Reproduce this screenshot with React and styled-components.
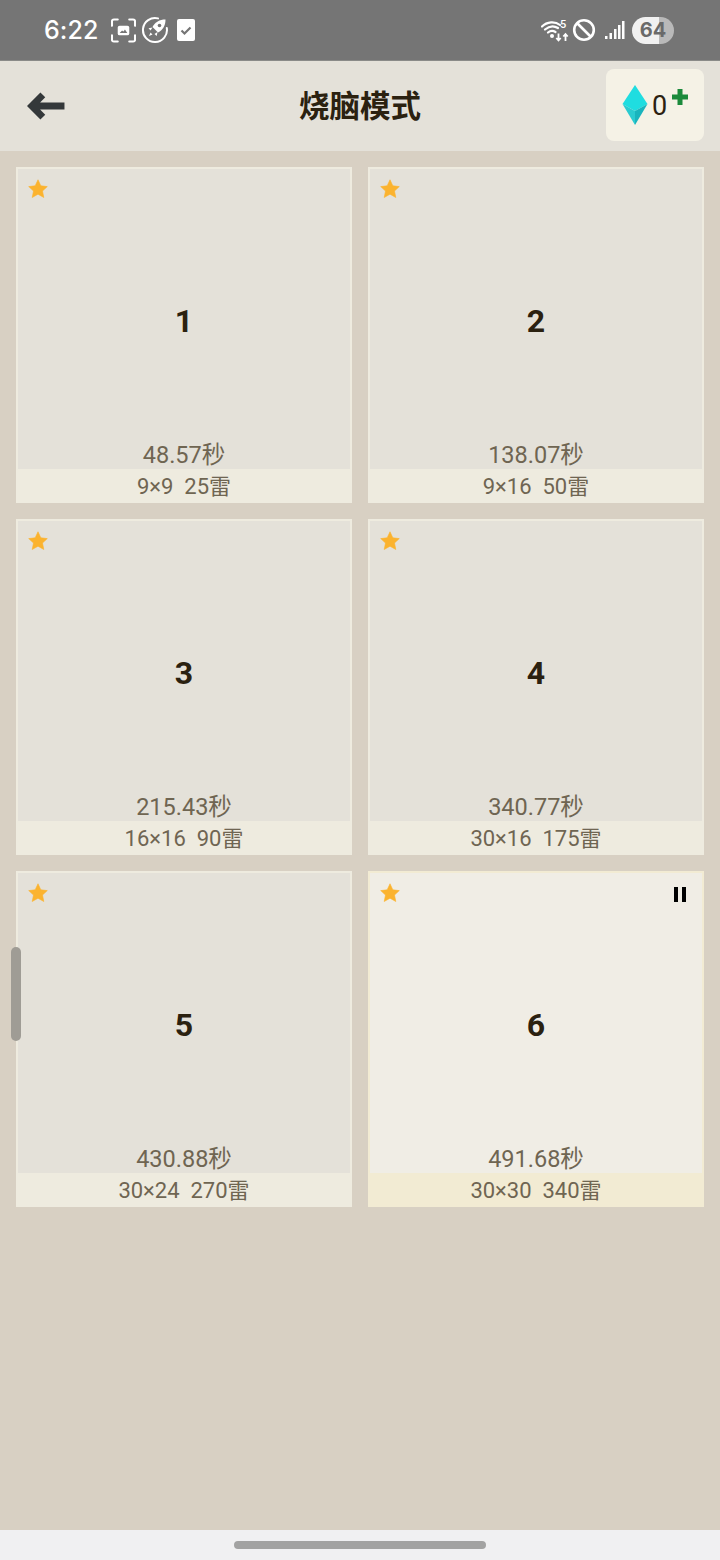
import React from "react";
import styled, {createGlobalStyle} from "styled-components";

const levels = [
  {id: 1, time: "48.57秒", info: "9×9  25雷"},
  {id: 2, time: "138.07秒", info: "9×16  50雷"},
  {id: 3, time: "215.43秒", info: "16×16  90雷"},
  {id: 4, time: "340.77秒", info: "30×16  175雷"},
  {id: 5, time: "430.88秒", info: "30×24  270雷"},
  {id: 6, time: "491.68秒", info: "30×30  340雷", active: true},
];

const Star = () => <StarIcon viewBox="0 0 20 20">
  <path d="M10 .8l2.800 6 6.500.8-4.800 4.400 1.300 6.500L10 15.200l-5.800 3.300 1.300-6.500L.7 7.600l6.500-.8z" fill="#fbb32f" stroke="#fbb32f" strokeWidth=".6" strokeLinejoin="round"/>
</StarIcon>;

const StatusBar = () => <Status>
  <Clock>6:22</Clock>
  <StatusIcon $left={12} width="25" height="25" viewBox="0 0 26 26" fill="none">
    <path d="M1 8V3.500Q1 1.500 3 1.500H7M19 1.500H23Q25 1.500 25 3.500V8M25 18V22.500Q25 24.500 23 24.500H19M7 24.500H3Q1 24.500 1 22.500V18" stroke="#fff" strokeWidth="2.200" strokeLinecap="round"/>
    <rect x="7" y="8" width="12" height="10" rx="2" fill="#fff"/>
    <path d="M9 15.500l2.500-2.500 1.500 1 1.500-2 2.500 3.500z" fill="#757575"/>
  </StatusIcon>
  <StatusIcon $left={5} width="28" height="28" viewBox="0 0 28 28" fill="none">
    <path d="M17 2.400A12 12 0 1 0 25.800 12" stroke="#fff" strokeWidth="2" strokeLinecap="round"/>
    <path d="M24.500 3.500c-6 0-10.500 2.500-13 7.500l5.500 5.500c5-2.500 7.500-7 7.500-13z" fill="#fff"/>
    <circle cx="18.500" cy="9.500" r="1.800" fill="#757575"/>
    <path d="M11.500 11.500l-4 .8 2 2.200zM16.500 16l-.8 4-2.200-2zM9.500 16.500l2 2-3.500 1.500z" fill="#fff"/>
  </StatusIcon>
  <StatusIcon $left={8} width="18" height="22" viewBox="0 0 18 22">
    <rect width="18" height="22" rx="2" fill="#fff"/>
    <path d="M4.500 11.500l3 3 6-6" stroke="#757575" strokeWidth="2.200" fill="none"/>
  </StatusIcon>
  <StatusRight>
    <svg width="29" height="24" viewBox="0 0 29 24" fill="none">
      <path d="M1 8.500C6 3.500 14 3 19 7M4 11.500C8 8 13 7.500 17 10M7 14.500C9.500 12.500 12 12.500 14.500 14" stroke="#fff" strokeWidth="2.200" strokeLinecap="round"/>
      <circle cx="11" cy="18" r="2" fill="#fff"/>
      <path d="M17.500 15.500v7M15.300 20l2.200 2.500 2.200-2.500M24.500 23v-7M22.300 18.500l2.200-2.500 2.200 2.500" stroke="#fff" strokeWidth="1.800"/>
      <StatusDigit x="19" y="9.500">5</StatusDigit>
    </svg>
    <StatusIcon $left={2} width="24" height="24" viewBox="0 0 24 24" fill="none">
      <circle cx="12" cy="12" r="9.800" stroke="#fff" strokeWidth="2.600"/>
      <path d="M5 5l14 14" stroke="#fff" strokeWidth="2.600"/>
    </StatusIcon>
    <StatusIcon $left={9} width="20" height="20" viewBox="0 0 20 20" fill="#fff">
      <rect x="0" y="16" width="2.500" height="3"/>
      <rect x="4.500" y="13" width="2.500" height="6"/>
      <rect x="9" y="9" width="2.500" height="10"/>
      <rect x="13" y="5" width="2.500" height="14"/>
      <rect x="17" y="1" width="2.500" height="18"/>
    </StatusIcon>
    <Battery>64</Battery>
  </StatusRight>
</Status>;

const Header = () => <AppBar>
  <BackIcon viewBox="0 0 36 28">
    <path d="M15 3.500L4.500 14 15 24.500M7 14h28.500" fill="none" stroke="#34383a" strokeWidth="6.500"/>
  </BackIcon>
  <Title>烧脑模式</Title>
  <GemBox>
    <svg width="26" height="40" viewBox="0 0 26 40">
      <path d="M13 0L25.500 19 13 26 .5 19z" fill="#1fdde0"/>
      <path d="M13 26L25.500 19 13 40z" fill="#19b4bd"/>
      <path d="M13 26L.5 19 13 40z" fill="#2acbd0"/>
    </svg>
    <GemCount>0</GemCount>
    <PlusIcon viewBox="0 0 16 16">
      <path d="M5.500 0h5v5.500H16v5h-5.500V16h-5v-5.500H0v-5h5.500z" fill="#1b8a3b"/>
    </PlusIcon>
  </GemBox>
</AppBar>;

const LevelCard = ({level}) => <Card $active={level.active}>
  <CardBody>
    <Star/>
    {level.active && <Pause><i/><i/></Pause>}
    <Num>{level.id}</Num>
    <Time>{level.time}</Time>
  </CardBody>
  <Info $active={level.active}>{level.info}</Info>
</Card>;

export default function App() {
  return <Page>
    <GlobalStyle/>
    <StatusBar/>
    <Header/>
    <Grid>
      {levels.map(level => <LevelCard key={level.id} level={level}/>)}
    </Grid>
    <Scrollbar/>
    <NavBar><NavHandle/></NavBar>
  </Page>;
}

const GlobalStyle = createGlobalStyle`
  html, body {
    margin: 0;
    padding: 0;
    background: #d8d0c3;
  }
`;

const Page = styled.div`
  position: relative;
  width: 720px;
  height: 1560px;
  display: flex;
  flex-direction: column;
  overflow: hidden;
  background: #d8d0c3;
  font-family: Roboto, "Noto Sans CJK SC", sans-serif;
`;

const Status = styled.div`
  height: 61px;
  flex: none;
  display: flex;
  align-items: center;
  padding: 0 46px 0 44px;
  background: #757575;
  box-sizing: border-box;
  border-bottom: 1px solid #8a8a88;
`;

const StatusIcon = styled.svg`
  flex: none;
  margin-left: ${p => p.$left}px;
`;

const StatusDigit = styled.text`
  font-family: Roboto, sans-serif;
  font-size: 11px;
  font-weight: 500;
  fill: #fff;
`;

const Clock = styled.div`
  font-family: Inter, Roboto, sans-serif;
  font-size: 25px;
  font-weight: 500;
  color: #fff;
  letter-spacing: 0.1px;
`;

const StatusRight = styled.div`
  margin-left: auto;
  display: flex;
  align-items: center;
`;

const Battery = styled.div`
  width: 42px;
  height: 27px;
  margin-left: 7px;
  border-radius: 14px;
  background: linear-gradient(90deg, #f1f1f1 0 64%, #b9b9b9 64% 100%);
  color: #6a6a6a;
  font-family: Inter, Roboto, sans-serif;
  font-size: 20px;
  font-weight: 700;
  line-height: 27px;
  text-align: center;
`;

const AppBar = styled.div`
  position: relative;
  height: 90px;
  flex: none;
  display: flex;
  align-items: center;
  justify-content: space-between;
  padding: 0 16px 2px 27px;
  box-sizing: border-box;
  background: #e4e1d9;
`;

const BackIcon = styled.svg`
  width: 38px;
  height: 30px;
  margin-top: 2px;
`;

const Title = styled.h1`
  position: absolute;
  top: 0;
  left: 0;
  right: 0;
  margin: 0;
  text-align: center;
  font-size: 30.5px;
  line-height: 92px;
  font-weight: 700;
  color: #2b2110;
  pointer-events: none;
`;

const GemBox = styled.div`
  position: relative;
  width: 98px;
  height: 72px;
  display: flex;
  align-items: center;
  padding-left: 16px;
  box-sizing: border-box;
  border-radius: 8px;
  background: #f5f2e6;
`;

const GemCount = styled.span`
  margin: 2px 0 0 4px;
  font-size: 27px;
  color: #2b2110;
`;

const PlusIcon = styled.svg`
  position: absolute;
  top: 20px;
  right: 16px;
  width: 16px;
  height: 16px;
`;

const Grid = styled.div`
  display: grid;
  grid-template-columns: repeat(2, 336px);
  grid-auto-rows: 336px;
  gap: 16px;
  padding: 16px;
`;

const Card = styled.div`
  display: flex;
  flex-direction: column;
  box-sizing: border-box;
  border: 2px solid ${p => p.$active ? "#f2ebd3" : "#eeebdf"};
  border-bottom: 0;
  background: ${p => p.$active ? "#f0ede5" : "#e4e1d9"};
`;

const CardBody = styled.div`
  position: relative;
  flex: 1;
  display: flex;
  flex-direction: column;
  align-items: center;
  justify-content: flex-end;
`;

const StarIcon = styled.svg`
  position: absolute;
  top: 10px;
  left: 10px;
  width: 20px;
  height: 20px;
`;

const Pause = styled.div`
  position: absolute;
  top: 14px;
  right: 16px;
  display: flex;
  gap: 4px;

  i {
    display: block;
    width: 4px;
    height: 15px;
    background: #000;
  }
`;

const Num = styled.div`
  position: absolute;
  top: 133px;
  left: 0;
  right: 0;
  text-align: center;
  font-size: 32px;
  line-height: 38px;
  font-weight: 700;
  color: #2b2110;
`;

const Time = styled.div`
  font-size: 23.5px;
  line-height: 30px;
  margin-bottom: -1px;
  color: #6f6552;
`;

const Info = styled.div`
  height: 34px;
  margin: 0 -2px;
  background: ${p => p.$active ? "#f2ebd3" : "#eeebdf"};
  font-size: 22px;
  line-height: 36px;
  text-align: center;
  white-space: pre;
  color: #6f6552;
`;

const Scrollbar = styled.div`
  position: absolute;
  left: 11px;
  top: 947px;
  width: 10px;
  height: 94px;
  border-radius: 5px;
  background: #9f9c95;
`;

const NavBar = styled.div`
  position: absolute;
  left: 0;
  right: 0;
  bottom: 0;
  height: 30px;
  display: flex;
  align-items: center;
  justify-content: center;
  background: #f0f0f2;
`;

const NavHandle = styled.div`
  width: 252px;
  height: 8px;
  border-radius: 4px;
  background: #a2a2a2;
`;
